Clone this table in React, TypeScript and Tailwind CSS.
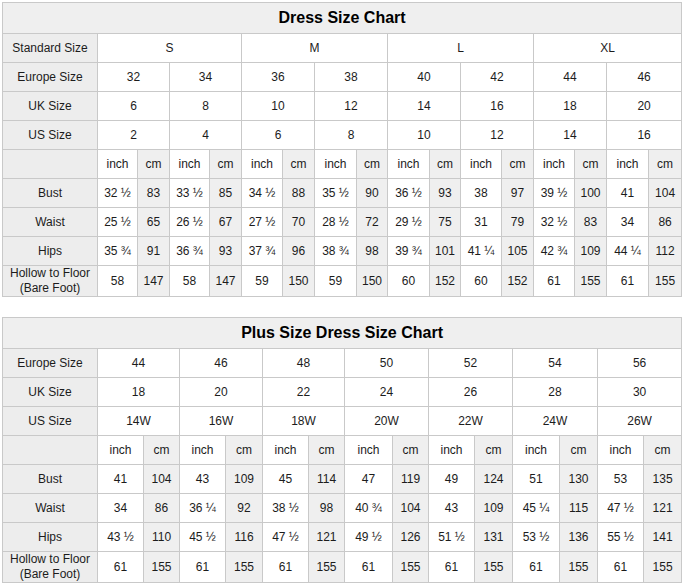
import React from "react";

type Row = { label: React.ReactNode; cells: string[]; span: number; grayCm?: boolean };

const border = "border border-[#c9c9c9]";

function SizeTable({
  title,
  widths,
  rows,
  last,
}: {
  title: string;
  widths: number[];
  rows: Row[];
  last: boolean;
}) {
  return (
    <table
      className="table-fixed border-collapse w-[679px] text-[12px] text-[#1c1c1c]"
      style={{ fontFamily: '"Liberation Sans", Arial, sans-serif' }}
    >
      <colgroup>
        {widths.map((w, i) => (
          <col key={i} style={{ width: w }} />
        ))}
      </colgroup>
      <tbody>
        <tr className="h-[31px]">
          <td
            colSpan={widths.length}
            className={`${border} bg-[#efefef] text-center text-[16px] font-bold text-black`}
          >
            {title}
          </td>
        </tr>
        {rows.map((r, ri) => {
          const isLast = ri === rows.length - 1;
          return (
            <tr key={ri} className={isLast ? "h-[31px]" : "h-[29px]"}>
              <td className={`${border} bg-[#ededed] text-center leading-[15px] p-0`}>{r.label}</td>
              {r.cells.map((c, ci) => (
                <td
                  key={ci}
                  colSpan={r.span}
                  className={`${border} text-center p-0 ${
                    r.grayCm && ci % 2 === 1 ? "bg-[#efefef]" : "bg-white"
                  }`}
                >
                  {c}
                </td>
              ))}
            </tr>
          );
        })}
      </tbody>
    </table>
  );
}

const pairs = (n: number) => Array.from({ length: n }).flatMap(() => ["inch", "cm"]);

const hollow = (
  <>
    Hollow to Floor
    <br />
    (Bare Foot)
  </>
);

export default function App() {
  const w1 = [95, 40, 32, 40, 32, 41, 32, 42, 31, 42, 31, 41, 32, 41, 32, 42, 33];
  const w2 = [95, 46, 36, 46, 37, 46, 36, 48, 36, 46, 38, 47, 38, 46, 38];

  const rows1: Row[] = [
    { label: "Standard Size", cells: ["S", "M", "L", "XL"], span: 4 },
    { label: "Europe Size", cells: ["32", "34", "36", "38", "40", "42", "44", "46"], span: 2 },
    { label: "UK Size", cells: ["6", "8", "10", "12", "14", "16", "18", "20"], span: 2 },
    { label: "US Size", cells: ["2", "4", "6", "8", "10", "12", "14", "16"], span: 2 },
    { label: "", cells: pairs(8), span: 1, grayCm: true },
    {
      label: "Bust",
      cells: ["32 ½", "83", "33 ½", "85", "34 ½", "88", "35 ½", "90", "36 ½", "93", "38", "97", "39 ½", "100", "41", "104"],
      span: 1,
      grayCm: true,
    },
    {
      label: "Waist",
      cells: ["25 ½", "65", "26 ½", "67", "27 ½", "70", "28 ½", "72", "29 ½", "75", "31", "79", "32 ½", "83", "34", "86"],
      span: 1,
      grayCm: true,
    },
    {
      label: "Hips",
      cells: ["35 ¾", "91", "36 ¾", "93", "37 ¾", "96", "38 ¾", "98", "39 ¾", "101", "41 ¼", "105", "42 ¾", "109", "44 ¼", "112"],
      span: 1,
      grayCm: true,
    },
    {
      label: hollow,
      cells: ["58", "147", "58", "147", "59", "150", "59", "150", "60", "152", "60", "152", "61", "155", "61", "155"],
      span: 1,
      grayCm: true,
    },
  ];

  const rows2: Row[] = [
    { label: "Europe Size", cells: ["44", "46", "48", "50", "52", "54", "56"], span: 2 },
    { label: "UK Size", cells: ["18", "20", "22", "24", "26", "28", "30"], span: 2 },
    { label: "US Size", cells: ["14W", "16W", "18W", "20W", "22W", "24W", "26W"], span: 2 },
    { label: "", cells: pairs(7), span: 1, grayCm: true },
    {
      label: "Bust",
      cells: ["41", "104", "43", "109", "45", "114", "47", "119", "49", "124", "51", "130", "53", "135"],
      span: 1,
      grayCm: true,
    },
    {
      label: "Waist",
      cells: ["34", "86", "36 ¼", "92", "38 ½", "98", "40 ¾", "104", "43", "109", "45 ¼", "115", "47 ½", "121"],
      span: 1,
      grayCm: true,
    },
    {
      label: "Hips",
      cells: ["43 ½", "110", "45 ½", "116", "47 ½", "121", "49 ½", "126", "51 ½", "131", "53 ½", "136", "55 ½", "141"],
      span: 1,
      grayCm: true,
    },
    {
      label: hollow,
      cells: ["61", "155", "61", "155", "61", "155", "61", "155", "61", "155", "61", "155", "61", "155"],
      span: 1,
      grayCm: true,
    },
  ];

  return (
    <div className="w-[685px] h-[586px] bg-white pl-[2px] pt-[2px] flex flex-col gap-[20px]">
      <SizeTable title="Dress Size Chart" widths={w1} rows={rows1} last={false} />
      <SizeTable title="Plus Size Dress Size Chart" widths={w2} rows={rows2} last={true} />
    </div>
  );
}
